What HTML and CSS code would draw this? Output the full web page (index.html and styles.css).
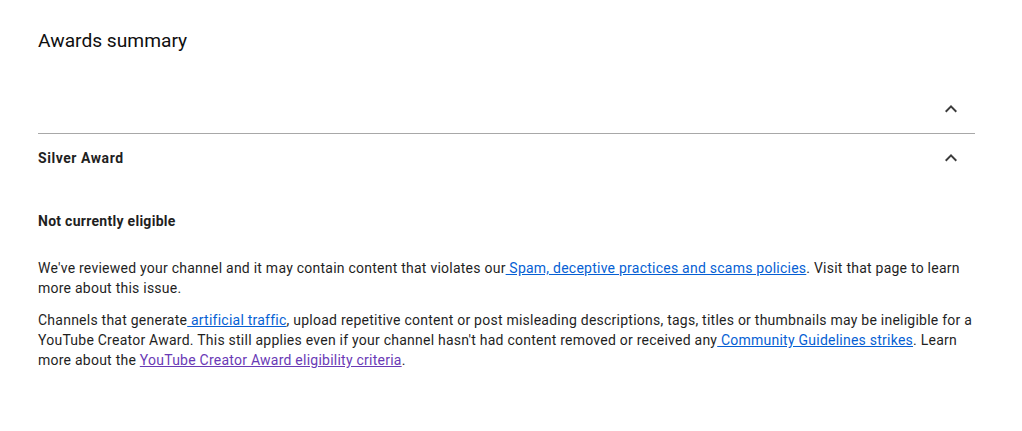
FILE: index.html
```html
<!DOCTYPE html>
<html lang="en">
<head>
<meta charset="utf-8">
<title>Awards summary</title>
<link rel="stylesheet" href="styles.css">
</head>
<body>
<main class="page">
  <h1 class="title">Awards summary</h1>
  <div class="row row-top">
    <span class="row-label"></span>
    <button class="chev" aria-label="Collapse">
      <svg viewBox="0 0 24 24" width="24" height="24"><path d="M7.41 15.41 12 10.83l4.59 4.58L18 14l-6-6-6 6z"/></svg>
    </button>
  </div>
  <div class="row row-award">
    <span class="row-label">Silver Award</span>
    <button class="chev" aria-label="Collapse">
      <svg viewBox="0 0 24 24" width="24" height="24"><path d="M7.41 15.41 12 10.83l4.59 4.58L18 14l-6-6-6 6z"/></svg>
    </button>
  </div>
  <section class="body">
    <h2 class="status">Not currently eligible</h2>
    <p class="para">We've reviewed your channel and it may contain content that violates our<a class="link" href="#"> Spam, deceptive practices and scams policies</a>. Visit that page to learn more about this issue.</p>
    <p class="para">Channels that generate<a class="link" href="#"> artificial traffic</a>, upload repetitive content or post misleading descriptions, tags, titles or thumbnails may be ineligible for a YouTube Creator Award. This still applies even if your channel hasn't had content removed or received any<a class="link" href="#"> Community Guidelines strikes</a>. Learn more about the <a class="link visited" href="#">YouTube Creator Award eligibility criteria</a>.</p>
  </section>
</main>
</body>
</html>
```
FILE: styles.css
```css
html, body {
  margin: 0;
  padding: 0;
  background: #ffffff;
}
body {
  font-family: Roboto, "Noto Sans", Arial, sans-serif;
  color: #0f0f0f;
}
.page {
  padding: 27px 47px 0 38px;
}
.title {
  margin: 0;
  font-size: 19.2px;
  line-height: 28px;
  font-weight: 400;
  color: #0f0f0f;
}
.row {
  display: flex;
  align-items: center;
  justify-content: space-between;
  height: 48px;
}
.row-top {
  margin-top: 30px;
  border-bottom: 1px solid #a8a8a8;
}
.row-label {
  font-size: 14px;
  font-weight: 700;
  letter-spacing: 0.55px;
  color: #1f1f1f;
}
.chev {
  display: flex;
  align-items: center;
  justify-content: center;
  width: 24px;
  height: 24px;
  margin-right: 12px;
  padding: 0;
  border: 0;
  background: none;
}
.chev svg {
  fill: #3c3c3c;
}
.body {
  padding-top: 29px;
}
.status {
  margin: 0 0 27px;
  font-size: 14px;
  line-height: 20px;
  font-weight: 700;
  letter-spacing: 0.28px;
  color: #1f1f1f;
}
.para {
  margin: 0 0 12px;
  font-size: 14px;
  line-height: 20px;
  letter-spacing: 0.24px;
  color: #1f1f1f;
}
.link {
  color: #065fd4;
  text-decoration: underline;
}
.link.visited {
  color: #6a3ab6;
}
```
